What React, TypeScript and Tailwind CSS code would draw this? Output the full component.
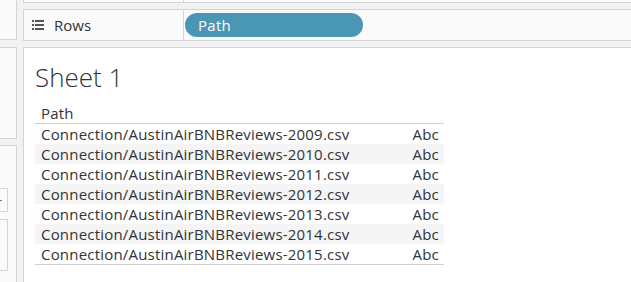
import React from "react";

const rows = [2009, 2010, 2011, 2012, 2013, 2014, 2015];

function ListIcon() {
  return (
    <svg width="12" height="10" viewBox="0 0 12 10" className="shrink-0">
      <rect x="0" y="0" width="2" height="2" fill="#555" />
      <rect x="3" y="0" width="9" height="2" fill="#555" />
      <rect x="0" y="4" width="2" height="2" fill="#555" />
      <rect x="3" y="4" width="9" height="2" fill="#555" />
      <rect x="0" y="8" width="2" height="2" fill="#555" />
      <rect x="3" y="8" width="9" height="2" fill="#555" />
    </svg>
  );
}

export default function App() {
  return (
    <div
      className="w-[631px] h-[282px] bg-[#f2f2f2] flex gap-[6px] overflow-hidden text-[#333]"
      style={{ fontFamily: '"Open Sans", "Noto Sans", sans-serif' }}
    >
      {/* 左侧面板 */}
      <div className="w-[17px] flex flex-col shrink-0">
        <div className="h-[40px] bg-[#fafafa] border-r border-b border-[#d4d4d4]" />
        <div className="mt-[7px] h-[92px] bg-[#fafafa] border-y border-r border-[#d4d4d4]" />
        <div className="mt-[6px] flex-1 bg-[#fafafa] border-t border-r border-[#d4d4d4] pt-[42px] pr-[8px]">
          <div className="h-[24px] border-y border-r border-[#d4d4d4] bg-[#fafafa] flex items-center">
            <div className="w-[2px] h-[1px] bg-[#777]" />
          </div>
          <div className="mt-[7px] h-[52px] border-y border-r border-[#d4d4d4] bg-[#fafafa]" />
        </div>
      </div>

      {/* 主区域 */}
      <div className="flex-1 flex flex-col">
        <div className="h-[3px] bg-[#fafafa] border-b border-l border-[#d4d4d4] flex">
          <div className="w-[160px] border-r border-[#d4d4d4]" />
        </div>
        <div className="mt-[6px] h-[32px] bg-[#fafafa] border-y border-l border-[#d4d4d4] flex">
          <div className="w-[160px] border-r border-[#d4d4d4] flex items-center gap-[10px] pl-[8px]">
            <ListIcon />
            <span className="text-[15px]">Rows</span>
          </div>
          <div className="flex items-center pl-[1px]">
            <div className="w-[178px] h-[24px] rounded-full bg-[#4a97b4] text-white text-[15px] font-medium tracking-[0.3px] flex items-center pl-[13px]">
              Path
            </div>
          </div>
        </div>

        <div className="mt-[6px] flex-1 bg-white border-t border-l border-[#d4d4d4] pl-[11px] pt-[13px]">
          <div className="text-[26px] font-light leading-[32px] text-[#333]">Sheet 1</div>
          <div className="mt-[11px] w-[409px]">
            <div className="h-[20px] border-b border-[#cfcfcf] text-[15px] leading-[18px] pl-[6px] tracking-[0.2px]">Path</div>
            <div className="border-b border-[#cfcfcf]">
              {rows.map((y, i) => (
                <div
                  key={y}
                  className={`h-[20px] flex items-center justify-between pl-[6px] pr-[5px] text-[15px] tracking-[0.2px] ${
                    i % 2 === 1 ? "bg-[#f5f5f5]" : "bg-white"
                  }`}
                >
                  <span>Connection/AustinAirBNBReviews-{y}.csv</span>
                  <span>Abc</span>
                </div>
              ))}
            </div>
          </div>
        </div>
      </div>
    </div>
  );
}
